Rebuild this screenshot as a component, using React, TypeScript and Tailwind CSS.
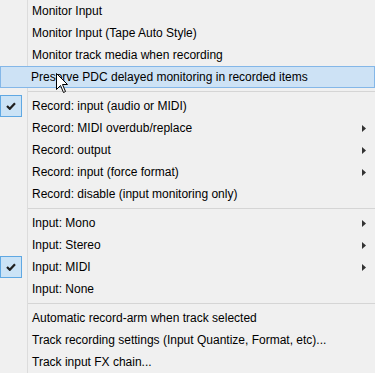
import { ReactNode } from 'react';

type Item = {
  label: string;
  checked?: boolean;
  submenu?: boolean;
  hover?: boolean;
};

const groups: Item[][] = [
  [
    { label: 'Monitor Input' },
    { label: 'Monitor Input (Tape Auto Style)' },
    { label: 'Monitor track media when recording' },
    { label: 'Preserve PDC delayed monitoring in recorded items', hover: true },
  ],
  [
    { label: 'Record: input (audio or MIDI)', checked: true },
    { label: 'Record: MIDI overdub/replace', submenu: true },
    { label: 'Record: output', submenu: true },
    { label: 'Record: input (force format)', submenu: true },
    { label: 'Record: disable (input monitoring only)' },
  ],
  [
    { label: 'Input: Mono', submenu: true },
    { label: 'Input: Stereo', submenu: true },
    { label: 'Input: MIDI', checked: true, submenu: true },
    { label: 'Input: None' },
  ],
  [
    { label: 'Automatic record-arm when track selected' },
    { label: 'Track recording settings (Input Quantize, Format, etc)...' },
    { label: 'Track input FX chain...' },
  ],
];

const CheckBox = () => (
  <div className="w-[22px] h-[22px] border border-[#5fa8e3] bg-[#cbe3f6] flex items-center justify-center">
    <svg width="10" height="8" viewBox="0 0 10 8">
      <path d="M1 4 L3.8 6.8 L9 1.2" stroke="#1f1f1f" strokeWidth="2.2" fill="none" />
    </svg>
  </div>
);

const Arrow = () => (
  <svg width="4" height="7" viewBox="0 0 4 7" className="mr-[9px]">
    <path d="M0 0 L4 3.5 L0 7 Z" fill="#333" />
  </svg>
);

const Row = ({ item }: { item: Item }): ReactNode => (
  <div
    className={
      'relative h-[22px] flex items-center ' +
      (item.hover ? 'border border-[#84b7e8] bg-[#cde2f5]' : '')
    }
  >
    <div className={'w-[28px] h-full flex items-center shrink-0 ' + (item.hover ? '-ml-px' : '')}>
      {item.checked && <CheckBox />}
    </div>
    <span className={'flex-1 pl-[4px] text-[12px] text-black ' + (item.hover ? '-ml-px' : '')}>
      {item.label}
    </span>
    {item.submenu && <Arrow />}
  </div>
);

export default function App() {
  return (
    <div
      className="relative w-[375px] h-[373px] bg-[#f0f0f0] overflow-hidden"
      style={{ fontFamily: '"Liberation Sans", Arial, sans-serif' }}
    >
      <div className="absolute left-[27px] top-0 bottom-0 w-px bg-[#dcdcdc]" />
      <div className="relative">
        {groups.map((g, gi) => (
          <div key={gi}>
            {gi > 0 && (
              <div className="h-[7px] flex items-center pl-[28px]">
                <div className="w-full h-px bg-[#d5d5d5]" />
              </div>
            )}
            {g.map((it) => (
              <Row key={it.label} item={it} />
            ))}
          </div>
        ))}
      </div>
      <svg className="absolute left-[56px] top-[73px]" width="13" height="21" viewBox="0 0 13 21">
        <path
          d="M0.5 0.5 L0.5 16.5 L4.5 12.5 L7.5 19.5 L9.5 18.5 L6.5 11.5 L11.5 11.5 Z"
          fill="#fff"
          stroke="#000"
          strokeWidth="1"
          strokeLinejoin="miter"
        />
      </svg>
    </div>
  );
}
